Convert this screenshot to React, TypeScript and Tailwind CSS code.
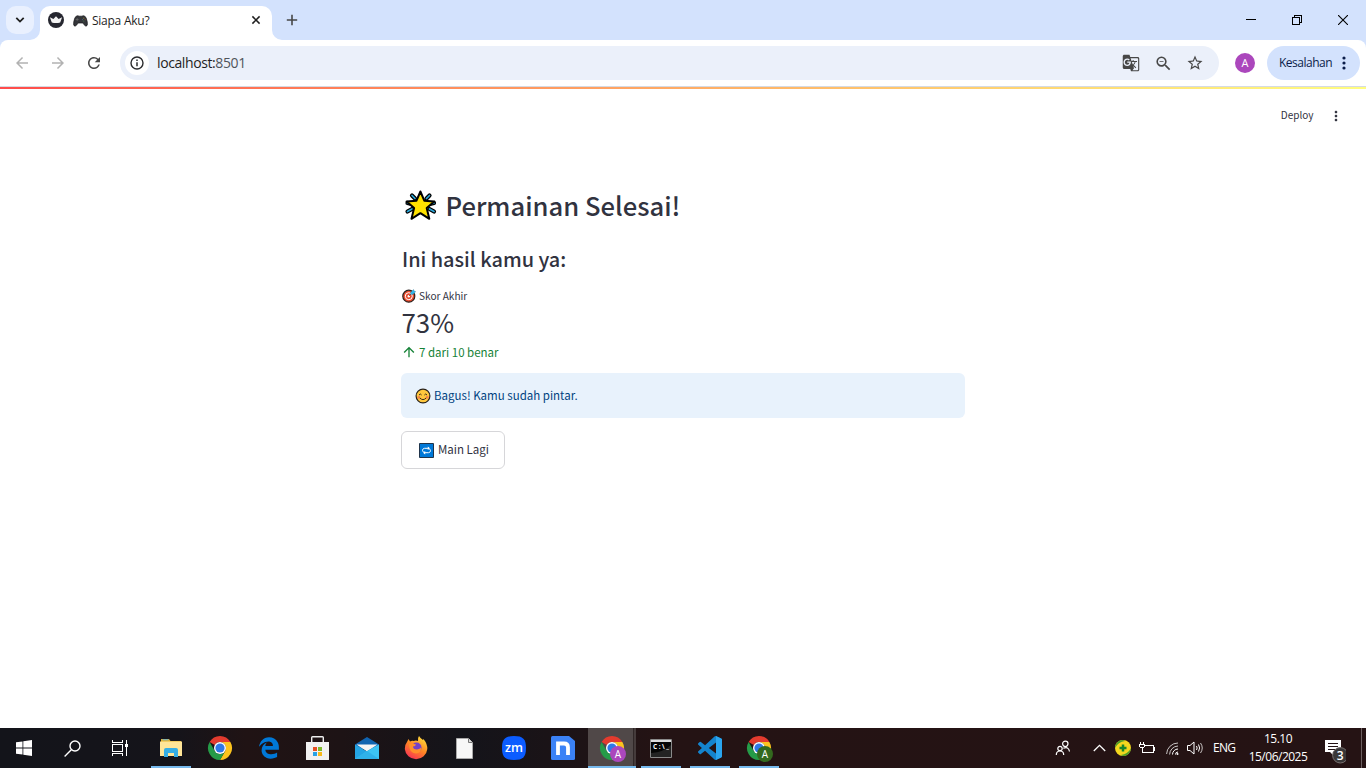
import React from 'react';
import { MdArrowBack, MdArrowForward, MdRefresh, MdGTranslate, MdStarOutline, MdZoomOut, MdMoreVert, MdArrowUpward } from 'react-icons/md';
import { FaEdgeLegacy } from 'react-icons/fa6';

const UI = "font-['Open_Sans','Noto_Sans',sans-serif]";
const SOURCE = "font-['Noto_Sans_CJK_SC','Open_Sans',sans-serif]";

function CrownFavicon() {
  return (
    <svg width="16" height="16" viewBox="0 0 16 16">
      <circle cx="8" cy="8" r="8" fill="#262730" />
      <path d="M1.900 5.200 5.400 6.900 8 4.200l2.600 2.700 3.500-1.700-1.900 5.200Q8 11.400 3.800 10.400z" fill="#f4f4f4" />
    </svg>
  );
}

function Gamepad() {
  return (
    <svg width="15" height="12" viewBox="0 0 15 12">
      <path d="M3.2 1.2Q5 .2 6 1.2h3Q10 .2 11.800 1.200 13.400 2 14.300 7.200 14.800 11.200 13 11.200 11.600 11 10 8H5Q3.400 11 2 11.200.2 11.200.7 7.200 1.600 2 3.200 1.200z" fill="#34363a" stroke="#17181a" strokeWidth=".7" />
      <path d="M4.200 3v3M2.700 4.500h3" stroke="#666" strokeWidth=".8" />
      <circle cx="10.800" cy="3.200" r=".6" fill="#8c7c3c" />
      <circle cx="12.200" cy="4.600" r=".6" fill="#7d423d" />
      <circle cx="9.500" cy="4.600" r=".6" fill="#42627c" />
      <circle cx="10.800" cy="6" r=".6" fill="#4b7a4d" />
    </svg>
  );
}

function TabStrip() {
  return (
    <header className="flex h-10 bg-[#d3e2fd] pl-1.5 pt-1.5">
      <button className="flex h-7 w-7 shrink-0 items-center justify-center rounded-[10px] bg-[#e9f0fe]">
        <svg width="10" height="6" viewBox="0 0 10 6"><path d="m1.300.9 3.700 3.700L8.700.9" fill="none" stroke="#1f1f1f" strokeWidth="1.800" /></svg>
      </button>
      <div className="relative ml-1.5 flex h-[34px] w-[232px] items-center rounded-t-[10px] bg-white pb-1.5 pl-2 pr-[11px]">
        <svg className="absolute -left-2.5 bottom-0" width="10" height="10"><path d="M10 0v10H0A10 10 0 0 0 10 0" fill="#fff" /></svg>
        <svg className="absolute -right-2.5 bottom-0" width="10" height="10"><path d="M0 0v10h10A10 10 0 0 1 0 0" fill="#fff" /></svg>
        <CrownFavicon />
        <span className="ml-[9px] mt-0.5"><Gamepad /></span>
        <span className="ml-[4px] pt-0.5 text-[12px] tracking-[-0.25px] text-[#1f1f1f]">Siapa Aku?</span>
        <svg className="ml-auto" width="10" height="10" viewBox="0 0 10 10"><path d="m1.400 1.400 7.200 7.200m0-7.200-7.200 7.200" stroke="#1f1f1f" strokeWidth="1.500" /></svg>
      </div>
      <svg className="ml-[14px] mt-2" width="12" height="12" viewBox="0 0 12 12"><path d="M6 .8v10.400M.8 6h10.400" stroke="#474747" strokeWidth="1.600" /></svg>
      <div className="ml-auto flex h-7 items-center gap-9 pr-[18px]">
        <svg width="10" height="10" shapeRendering="crispEdges"><path d="M0 4.500h10" stroke="#000" /></svg>
        <svg width="10" height="10" viewBox="0 0 10 10" fill="none" stroke="#000" shapeRendering="crispEdges"><path d="M.5 2.500h7v7h-7zM2.500 2.500v-2h7v7h-2" /></svg>
        <svg width="10" height="10" viewBox="0 0 10 10"><path d="m0 0 10 10M10 0 0 10" stroke="#000" strokeWidth="1.100" /></svg>
      </div>
    </header>
  );
}

function Toolbar() {
  return (
    <div className="bg-[#d3e2fd]">
      <div className="flex h-[47px] items-center rounded-t-lg border-b border-[#d5dae3] bg-white pl-[13px] pr-1.5">
        <MdArrowBack className="h-[18px] w-[18px] text-[#b2b2b2]" />
        <MdArrowForward className="ml-[18px] h-[18px] w-[18px] text-[#b2b2b2]" />
        <MdRefresh className="ml-[18px] h-[18px] w-[18px] text-[#474747]" />
        <div className="ml-[17px] flex h-[34px] w-[1099px] items-center rounded-full bg-[#ebf0fa] pl-[5px] pr-[15px]">
          <span className="flex h-6 w-6 items-center justify-center rounded-full bg-white">
            <svg width="14" height="14" viewBox="0 0 14 14"><circle cx="7" cy="7" r="6" fill="none" stroke="#2b2c2e" strokeWidth="1.400" /><path d="M7 6.200v4M7 3.600V5" stroke="#2b2c2e" strokeWidth="1.500" /></svg>
          </span>
          <span className="ml-2 text-[14px] tracking-[-0.4px] text-[#1f1f1f] pb-0.5">localhost:<span className="text-[#50545a]">8501</span></span>
          <MdGTranslate className="ml-auto h-[18px] w-[18px] text-[#474747]" />
          <MdZoomOut className="ml-[14px] h-[19px] w-[19px] text-[#474747]" />
          <MdStarOutline className="ml-[13px] h-[18px] w-[18px] text-[#474747]" />
        </div>
        <span className="ml-4 flex h-5 w-5 items-center justify-center rounded-full bg-[#ab47bc] text-[11px] text-white">A</span>
        <button className="ml-3 flex h-[34px] w-[93px] items-center rounded-full bg-[#d3e2fd] pl-3 text-[12px] tracking-[-0.5px] text-[#0b1d4a]">
          Kesalahan
          <svg className="ml-auto mr-3.5" width="4" height="14" fill="#0b1d4a"><circle cx="2" cy="2" r="1.600" /><circle cx="2" cy="7" r="1.600" /><circle cx="2" cy="12" r="1.600" /></svg>
        </button>
      </div>
    </div>
  );
}

function GlowingStar() {
  return (
    <svg width="34" height="32" viewBox="0 0 34 32" strokeLinejoin="round" strokeLinecap="round">
      <g fill="none" stroke="#000" strokeWidth="4.200"><path d="m8 6.500 3 3M25.500 6.500l-3 3M3.500 14l4 1M30 14l-4 1M3.500 22.500 8 20M30 22.500 25.500 20" /></g>
      <g fill="none" stroke="#2ca9dc" strokeWidth="1.700"><path d="m8 6.500 3 3M25.500 6.500l-3 3M3.500 14l4 1M30 14l-4 1M3.500 22.500 8 20M30 22.500 25.500 20" /></g>
      <path d="m16.400 2.500 3.900 9.200 10 .8-7.600 6.600 2.600 10.700-8.900-5.600-8.900 5.600 2.600-10.700L2.600 12.500l9.900-.8z" fill="#ffe200" stroke="#000" strokeWidth="2" />
    </svg>
  );
}

function Target() {
  return (
    <svg width="14" height="14" viewBox="0 0 14 14">
      <circle cx="6.800" cy="7.200" r="6" fill="#e84a2c" stroke="#2a2320" strokeWidth="1.200" />
      <circle cx="6.800" cy="7.200" r="3.500" fill="none" stroke="#fff" strokeWidth="1" />
      <circle cx="6.800" cy="7.200" r="1.200" fill="#fff" />
      <path d="m7 7 3-3" stroke="#555" strokeWidth=".8" />
      <path d="M8.500 3.500 11.500.4l.6 1.600 1.700.6L10.800 5.600 8.800 5.300z" fill="#32b5e8" stroke="#2a6a80" strokeWidth=".3" />
    </svg>
  );
}

function Smiley() {
  return (
    <svg width="16" height="16" viewBox="0 0 16 16" fill="none">
      <circle cx="8" cy="8" r="6.900" fill="#ffc83d" stroke="#29221b" strokeWidth="1.200" />
      <circle cx="3.800" cy="9.300" r="1.500" fill="#f7894a" /><circle cx="12.200" cy="9.300" r="1.500" fill="#f7894a" />
      <path d="M4 7q1.300-2 2.600 0M9.400 7q1.300-2 2.600 0M4.800 10q3.200 3.200 6.400 0" stroke="#3c2d18" strokeWidth="1" />
    </svg>
  );
}

function RepeatIcon() {
  return (
    <svg width="15" height="15" viewBox="0 0 15 15">
      <path d="M.5.5h14v14H.5z" fill="#0078d7" stroke="#20344a" />
      <path d="M4.300 9Q2.900 7.400 4 6q.5-.7 1.500-.7H9.500M10.700 6q1.400 1.600.3 3-.5.700-1.500.7H5.500" fill="none" stroke="#fff" strokeWidth="1" />
      <path d="M8.800 3.600 11 5.300 8.800 7zM6.200 8 4 9.700l2.200 1.700z" fill="#fff" />
    </svg>
  );
}

function AppPage() {
  return (
    <main className={`${SOURCE} flex-1 bg-white text-[#31333f]`}>
      <div className="h-0.5 bg-linear-to-r from-[#ff4b4b] to-[#fffd80]" />
      <div className="flex h-[53px] items-center justify-end pr-[22px] text-[10px]">
        <span className="pb-0.5">Deploy</span>
        <MdMoreVert className="ml-[14.500px] h-4 w-4" />
      </div>
      <div className="mx-auto w-[564px] pt-[43px]">
        <h1 className="flex h-9 items-center pl-[3px] pt-1 text-[25.600px] font-medium leading-9">
          <GlowingStar />
          <span className="ml-[7.500px]">Permainan Selesai!</span>
        </h1>
        <h3 className="mt-[23px] h-[30px] pl-px text-[19.900px] font-medium leading-[30px]">Ini hasil kamu ya:</h3>
        <div className="mt-3.5 flex h-4 items-center gap-[3px] pl-px text-[10.100px] leading-4"><Target /><span>Skor Akhir</span></div>
        <div className="h-9 pl-[0.500px] text-[25.900px] leading-9">73%</div>
        <div className="mt-0.5 flex h-5 items-center gap-0.5 text-[11.500px] leading-5 text-[#158237]"><MdArrowUpward className="h-4 w-4" /><span>7 dari 10 benar</span></div>
        <div className="mt-[11px] flex h-[45px] items-center gap-[3px] rounded-md bg-[#e8f2fc] pl-3.5 text-[11.500px] text-[#004280]"><Smiley /><span>Bagus! Kamu sudah pintar.</span></div>
        <button className="mt-[13px] flex h-[38px] w-[104px] items-center gap-1 rounded-md border border-[#d6d6d9] pl-[17px] text-[11.500px]"><RepeatIcon /><span>Main Lagi</span></button>
      </div>
    </main>
  );
}

function Chrome({ badge }: { badge?: string }) {
  return (
    <svg width="24" height="24" viewBox="0 0 24 24" className="overflow-visible">
      <path d="M12 0a12 12 0 0 1 10.400 6H12a6 6 0 0 0-5.200 3L1.600 6A12 12 0 0 1 12 0" fill="#e33b2e" />
      <path d="M22.400 6A12 12 0 0 1 12 24l5.200-9A6 6 0 0 0 12 6z" fill="#fcc31e" />
      <path d="M12 24A12 12 0 0 1 1.600 6l5.200 9a6 6 0 0 0 10.400 0z" fill="#259b48" />
      <circle cx="12" cy="12" r="6" fill="#fff" /><circle cx="12" cy="12" r="4.600" fill="#2f78e8" />
      {badge && <><circle cx="18" cy="18" r="8" fill={badge} /><text x="18" y="21.500" textAnchor="middle" fontSize="10" fill="#fff">A</text></>}
    </svg>
  );
}

function Explorer() {
  return (
    <svg width="22" height="20" viewBox="0 0 22 20">
      <path d="M1 1h8l1.500 2H21v4H1z" fill="#e8b32b" /><path d="M2.500 1.300h6v1h-6z" fill="#62b6e0" />
      <path d="M0 3.500h22V18H0z" fill="#ffe598" />
      <path d="M4 19v-7q0-2 2-2h10q2 0 2 2v7h-4v-4H8v4z" fill="#36aee5" />
    </svg>
  );
}

function Store() {
  return (
    <svg width="23" height="24" viewBox="0 0 23 24">
      <path d="M5.700 7V1.500q0-.8.800-.8h10q.8 0 .8.800V7" fill="none" stroke="#eee" strokeWidth="1.400" />
      <path d="M0 6h23v17.500q0 .5-.5.500H.5Q0 24 0 23.500z" fill="#f1f1f1" />
      <path d="M7 11h4v4H7z" fill="#e64f24" /><path d="M12 11h4v4h-4z" fill="#7eb92c" /><path d="M7 16h4v4H7z" fill="#26a1e6" /><path d="M12 16h4v4h-4z" fill="#f8b818" />
    </svg>
  );
}

function Mail() {
  return (
    <svg width="24" height="22" viewBox="0 0 24 22">
      <path d="M0 7.500 12 0l12 7.500V12H0z" fill="#1064b0" /><path d="M1.500 7.500h21L12 14.500z" fill="#f4f4f4" />
      <path d="M0 7.500 12 14.500 24 22H0z" fill="#24a4e4" /><path d="M24 7.500 12 14 0 22h24z" fill="#3cc3f2" /><path d="m12 14 12 8H0z" fill="#2aa9e6" opacity=".7" />
    </svg>
  );
}

function Firefox() {
  return (
    <svg width="24" height="24" viewBox="0 0 24 24">
      <defs><linearGradient id="fox" x1=".8" y1="0" x2=".2" y2="1"><stop offset="0" stopColor="#ffe03b" /><stop offset=".5" stopColor="#ff8424" /><stop offset="1" stopColor="#f52b59" /></linearGradient></defs>
      <path d="M3 6 4.500 3 6 5.500Q8 4.500 9.500 5 12 4 14 5q-.5-3 1-5 1.500 2.500 4 4l.5-1q4 5 3.800 10A11.300 11.300 0 0 1 .8 13Q.5 9 3 6z" fill="url(#fox)" />
      <circle cx="12.500" cy="11.500" r="5" fill="#7542c7" />
      <path d="M5 8q3-1.500 5 0l2 .5q-.5 2-3 2 0 3 4 3 3-.3 4-2 .5 5.500-5 6Q5 17 5 8z" fill="#ff8f2b" />
    </svg>
  );
}

function Zoom() {
  return (
    <svg width="24" height="24" viewBox="0 0 24 24"><path d="M12 0c9 0 12 3 12 12s-3 12-12 12S0 21 0 12 3 0 12 0" fill="#0b5cff" /><text x="12" y="16" textAnchor="middle" fontSize="12" fontWeight="600" textLength="18" lengthAdjust="spacingAndGlyphs" fill="#fff">zm</text></svg>
  );
}

function Nitro() {
  return <svg width="24" height="24" viewBox="0 0 24 24"><path d="M1.500 0H18l6 5v17.500q0 1.500-1.500 1.500h-21Q0 24 0 22.500v-21Q0 0 1.500 0" fill="#3b82f6" /><path d="M7 19V7.500h6q4 0 4 4V19" fill="none" stroke="#fff" strokeWidth="3.800" /></svg>;
}

function Terminal() {
  return (
    <svg width="22" height="19" viewBox="0 0 22 19"><path d="M.5.5h21v18H.5z" fill="#050505" stroke="#8a8a8a" /><path d="M1 1h20v2H1z" fill="#ddd" /><path d="M1 14Q14 13 21 6v12H1z" fill="#fff" opacity=".12" /><text x="3" y="9.500" fontSize="6.500" fontWeight="700" textLength="16" fill="#fff">C:\_</text></svg>
  );
}

function VsCode() {
  return (
    <svg width="24" height="24" viewBox="0 0 24 24"><path d="M23.150 2.587 18.210.21a1.494 1.494 0 0 0-1.705.29l-9.460 8.630-4.120-3.128a.999.999 0 0 0-1.276.057L.327 7.261A1 1 0 0 0 .326 8.740L3.899 12 .326 15.260a1 1 0 0 0 .001 1.479L1.650 17.940a.999.999 0 0 0 1.276.057l4.120-3.128 9.460 8.630a1.492 1.492 0 0 0 1.704.29l4.942-2.377A1.500 1.500 0 0 0 24 20.060V3.939a1.500 1.500 0 0 0-.85-1.352zm-5.146 14.861L10.826 12l7.178-5.448z" fill="#1484ce" /><path d="m18 0 5.200 2.600q.8.500.8 1.400v16q0 .9-.8 1.400L18 24z" fill="#2aa5ef" /></svg>
  );
}

function TaskItem({ children, open, active }: { children: React.ReactNode; open?: boolean; active?: boolean }) {
  if (active) {
    return (
      <div className="flex h-10 w-[49px] flex-col pl-px">
        <div className="flex h-[38px] w-12">
          <div className="flex w-[45px] items-center justify-center bg-[#504848] pt-0.5 pl-[3px]">{children}</div>
          <div className="w-[3px] border-l border-[#302727] bg-[#453b3b]" />
        </div>
        <div className="h-0.5 w-12 bg-[#76b9ed]" />
      </div>
    );
  }
  return (
    <div className="flex h-10 w-[49px] flex-col items-center">
      <div className="flex h-[38px] items-center pt-0.5">{children}</div>
      {open && <div className="h-0.5 w-10 bg-[#76b9ed]" />}
    </div>
  );
}

function Tray() {
  return (
    <div className="ml-auto flex h-10 items-center text-white">
      <svg width="16" height="16" viewBox="0 0 16 16" fill="none" stroke="#fff" strokeWidth="1.200"><circle cx="10.300" cy="3.800" r="2.700" /><circle cx="5" cy="8.500" r="2.200" /><path d="M1.300 15q0-4 3.700-4t3.700 4M8.300 8.300Q13.500 6 14.500 11.500" /></svg>
      <svg className="ml-[22px]" width="13" height="8" viewBox="0 0 13 8" fill="none" stroke="#fff" strokeWidth="1.300"><path d="m.8 7 5.700-5.700L12.200 7" /></svg>
      <svg className="ml-[9px]" width="16" height="16" viewBox="0 0 16 16"><circle cx="8" cy="8" r="8" fill="#f3d71e" /><path d="M0 8a8 8 0 0 1 8-8l2 1Q3 2 0 8M16 8a8 8 0 0 1-8 8l-2-1q7-1 10-7" fill="#4a9d2b" /><path d="M8 4.500v7M4.500 8h7" stroke="#16852b" strokeWidth="2.500" /></svg>
      <svg className="ml-2" width="16" height="13" viewBox="0 0 16 13" fill="none" stroke="#fff" shapeRendering="crispEdges"><path d="M6 3.500h8.500v7H5.500M15.500 5v4M1.500 0v3M4.500 0v3M.5 2.500h5v2l-1 1h-3l-1-1zM3.500 6v4.500h3" /></svg>
      <svg className="ml-[11px]" width="13" height="13" viewBox="0 0 13 13" fill="none" stroke="#fff"><g opacity=".75"><path d="M.6 12A11.400 11.400 0 0 1 12 1M3.600 12.500A8.700 8.700 0 0 1 12 4" /></g><path d="M6.500 12.500A5.500 5.500 0 0 1 12 7M9.500 12.500A2.500 2.500 0 0 1 12 10" /><circle cx="11.500" cy="12" r="1" fill="#fff" stroke="none" /></svg>
      <svg className="ml-2" width="17" height="14" viewBox="0 0 17 14" fill="none" stroke="#fff"><path d="M.5 4.500H3l4-3.500v12L3 9.500H.5zM9.500 5q1.300 2 0 4M11.500 3.500q2.200 3.500 0 7" /><path d="M13.500 2q3.500 5 0 10" opacity=".75" /></svg>
      <span className="ml-[9px] w-6 whitespace-nowrap text-[12px] tracking-[-0.7px]">ENG</span>
      <div className="ml-[7px] w-[68px] whitespace-nowrap text-center text-[12px] leading-[18px] tracking-[-0.500px]"><div>15.10</div><div>15/06/2025</div></div>
      <svg className="ml-[8px] mt-1.5" width="26" height="26" viewBox="0 0 26 26">
        <path d="M5 2h16v12H13v3l-3-3H5z" fill="#fff" /><path d="M8 5.500h10M8 8.500h10M8 11.500h10" stroke="#241316" />
        <circle cx="20.300" cy="17.300" r="7.700" fill="#393738" stroke="#77706f" /><text x="20.300" y="21.800" textAnchor="middle" fontSize="12" fontWeight="600" fill="#fff">3</text>
      </svg>
      <div className="ml-[15px] mr-1 h-10 w-px bg-[#6c5f60]" />
    </div>
  );
}

function Taskbar() {
  return (
    <footer className="flex h-10 bg-[linear-gradient(90deg,#13141a_0%,#15141a_13%,#201314_18%,#1d1315_25%,#14141a_34%,#1a1317_40%,#241314_48%,#251314_100%)]">
      <div className="flex w-[146px]">
        <div className="flex w-12 items-center justify-center"><svg width="16" height="16" viewBox="0 0 16 16" fill="#fff"><path d="m0 2.300 6.500-.9v6.200H0zM7.300 1.300 16 0v7.600H7.300zM0 8.400h6.500v6.200L0 13.700zM7.300 8.400H16V16l-8.700-1.300z" /></svg></div>
        <div className="flex w-12 items-center justify-center"><svg width="17" height="17" viewBox="0 0 17 17" fill="none" stroke="#fff" strokeWidth="1.400"><circle cx="11" cy="6" r="5" /><path d="M7.300 9.700.6 16.400" /></svg></div>
        <div className="flex w-12 items-center justify-center"><svg width="16" height="16" viewBox="0 0 16 16" fill="none" stroke="#fff" shapeRendering="crispEdges"><path d="M.5 0v2.500h10V0M.5 16v-2.500h10V16M.5 4.500h10v7H.5zM14.500 0v16" /><path d="M13 4h3v3h-3z" fill="#fff" stroke="none" /></svg></div>
      </div>
      <TaskItem open><Explorer /></TaskItem>
      <TaskItem><Chrome /></TaskItem>
      <TaskItem><FaEdgeLegacy className="h-[22px] w-[22px] text-[#0078d7]" /></TaskItem>
      <TaskItem><Store /></TaskItem>
      <TaskItem><Mail /></TaskItem>
      <TaskItem><Firefox /></TaskItem>
      <TaskItem><svg width="17" height="21" viewBox="0 0 17 21"><path d="M.5.500h12l4 4v16H.5z" fill="#f7f7f7" stroke="#aaa" /><path d="M12.500.5v4h4" fill="#ddd" stroke="#777" /></svg></TaskItem>
      <TaskItem><Zoom /></TaskItem>
      <TaskItem><Nitro /></TaskItem>
      <TaskItem active><Chrome badge="#ab47bc" /></TaskItem>
      <TaskItem open><Terminal /></TaskItem>
      <TaskItem open><VsCode /></TaskItem>
      <TaskItem open><Chrome badge="#33691e" /></TaskItem>
      <Tray />
    </footer>
  );
}

export default function App() {
  return (
    <div className={`${UI} flex h-screen w-full flex-col overflow-hidden`}>
      <TabStrip />
      <Toolbar />
      <AppPage />
      <Taskbar />
    </div>
  );
}
